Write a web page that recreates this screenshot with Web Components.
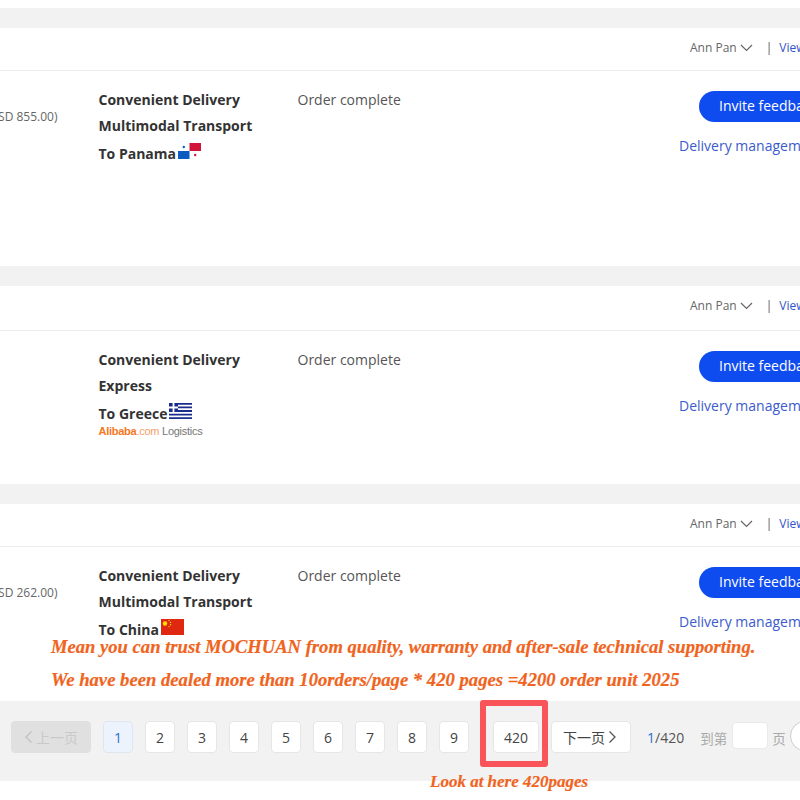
<!DOCTYPE html>
<html>
<head>
<meta charset="utf-8">
<title>Orders</title>
<style>
  html, body { margin: 0; background: #fff; }
  body { width: 800px; height: 800px; overflow: hidden; position: relative; font-family: "Open Sans", sans-serif; padding-top: 8px; box-sizing: border-box; }
</style>
</head>
<body>
<order-list>
  <order-card head="42" height="238" price="(USD 855.00)">
    <span slot="line1">Multimodal Transport</span>
    <span slot="dest">To Panama</span>
    <flag-icon slot="flag" country="pa"></flag-icon>
  </order-card>
  <order-card head="44" height="198">
    <span slot="line1">Express</span>
    <span slot="dest">To Greece</span>
    <flag-icon slot="flag" country="gr"></flag-icon>
    <logistics-logo slot="extra"></logistics-logo>
  </order-card>
  <order-card head="42" height="197" price="(USD 262.00)" last>
    <span slot="line1">Multimodal Transport</span>
    <span slot="dest">To China</span>
    <flag-icon slot="flag" country="cn"></flag-icon>
  </order-card>
</order-list>
<pager-bar></pager-bar>
<note-text x="51" y="635" size="18.6">Mean you can trust MOCHUAN from quality, warranty and after-sale technical supporting.</note-text>
<note-text x="51" y="668" size="18.66">We have been dealed more than 10orders/page * 420 pages =4200 order unit 2025</note-text>
<note-text x="430" y="770" size="17">Look at here 420pages</note-text>
<red-box></red-box>

<script>
class OrderList extends HTMLElement {
  constructor() {
    super();
    this.attachShadow({ mode: 'open' });
    this.shadowRoot.innerHTML = `
      <style>
        :host { display: flex; flex-direction: column; gap: 20px; background: #f2f2f2; padding-top: 20px; }
      </style>
      <slot></slot>`;
  }
}

class OrderCard extends HTMLElement {
  constructor() {
    super();
    this.attachShadow({ mode: 'open' });
  }
  connectedCallback() {
    const head = this.getAttribute('head');
    const height = this.getAttribute('height');
    const price = this.getAttribute('price') || '';
    this.shadowRoot.innerHTML = `
      <style>
        :host { display: block; background: #fff; height: ${height}px; overflow: hidden; color: #333; font-size: 14px; }
        .head { height: ${head}px; border-bottom: 1px solid #ececec; box-sizing: content-box; display: flex; align-items: flex-start; padding-left: 690px; font-size: 12px; line-height: 16px; color: #666; white-space: nowrap; }
        .head span { margin-top: 12px; flex: none; }
        .head svg { margin: 16px 0 0 3px; flex: none; }
        .head .sep { margin-left: 13px; color: #555; }
        .head .view { margin-left: 7px; color: #2f55c8; }
        .row { display: grid; grid-template-columns: 98.5px 199px 381.5px 200px; padding-top: 16px; line-height: 26px; }
        .price { font-size: 12px; color: #666; text-align: right; padding-top: 17px; padding-right: 41px; white-space: nowrap; direction: rtl; }
        .price span { unicode-bidi: plaintext; }
        .ship { font-weight: 700; white-space: nowrap; }
        .dest { display: flex; align-items: flex-end; height: 30px; gap: 2px; line-height: 30px; }
        .dest span { display: block; }
        .status { color: #555; }
        .actions { white-space: nowrap; }
        .btn { display: block; width: 140px; height: 31px; line-height: 30px; margin: 4px 0 0 20px; background: #0f4cf0; color: #fff; border-radius: 16px 0 0 16px; padding-left: 20px; }
        .link { display: block; color: #3b5bcc; margin-top: 11px; }
      </style>
      <div class="head">
        <span>Ann Pan</span>
        <svg width="13" height="8" viewBox="0 0 13 8"><path d="M1 1l5.5 5.5L12 1" fill="none" stroke="#666" stroke-width="1.2"/></svg>
        <span class="sep">|</span>
        <span class="view">View details</span>
      </div>
      <div class="row">
        <div class="price"><span>${price}</span></div>
        <div class="ship">
          <div>Convenient Delivery</div>
          <div><slot name="line1"></slot></div>
          <div class="dest"><slot name="dest"></slot><slot name="flag"></slot></div>
          <slot name="extra"></slot>
        </div>
        <div class="status">Order complete</div>
        <div class="actions">
          <span class="btn">Invite feedback</span>
          <span class="link">Delivery management</span>
        </div>
      </div>`;
  }
}

class FlagIcon extends HTMLElement {
  constructor() {
    super();
    this.attachShadow({ mode: 'open' });
  }
  connectedCallback() {
    const flags = {
      pa: `<rect width="23" height="16" fill="#fff"/>
           <rect x="11.5" width="11.5" height="8" fill="#d2143a"/>
           <rect y="8" width="11.5" height="8" fill="#0a5cc0"/>
           <circle cx="5.8" cy="4" r="1.2" fill="#0a5cc0"/>
           <circle cx="17.2" cy="12" r="1.2" fill="#d2143a"/>`,
      gr: `<rect width="23" height="16" fill="#fff"/>
           <path d="M0 .9h23M0 4.4h23M0 8h23M0 11.6h23M0 15.1h23" stroke="#1a2d8c" stroke-width="1.8"/>
           <rect width="9" height="9" fill="#1a2d8c"/>
           <path d="M4.5 0v9M0 4.5h9" stroke="#fff" stroke-width="1.8"/>`,
      cn: `<rect width="23" height="16" fill="#de2910"/>
           <circle cx="4" cy="4.5" r="2.2" fill="#ffde00"/>
           <circle cx="8" cy="1.6" r=".7" fill="#ffde00"/>
           <circle cx="9.6" cy="3.4" r=".7" fill="#ffde00"/>
           <circle cx="9.6" cy="5.8" r=".7" fill="#ffde00"/>
           <circle cx="8" cy="7.6" r=".7" fill="#ffde00"/>`
    };
    this.shadowRoot.innerHTML = `
      <style>
        :host { display: block; width: 23px; height: 16px; margin-bottom: 10px; }
        svg { display: block; }
      </style>
      <svg width="23" height="16" viewBox="0 0 23 16">${flags[this.getAttribute('country')]}</svg>`;
  }
}

class LogisticsLogo extends HTMLElement {
  constructor() {
    super();
    this.attachShadow({ mode: 'open' });
    this.shadowRoot.innerHTML = `
      <style>
        :host { display: block; font: 400 11px/14px "Liberation Sans", sans-serif; color: #777; margin-top: -5px; letter-spacing: -0.26px; }
        b { color: #f5761e; }
        i { font-style: normal; color: #f5a06a; }
      </style>
      <b>Alibaba</b><i>.com</i> Logistics`;
  }
}

class PageBtn extends HTMLElement {
  constructor() {
    super();
    this.attachShadow({ mode: 'open' });
    this.shadowRoot.innerHTML = `
      <style>
        :host { display: flex; flex: none; align-items: center; justify-content: center; box-sizing: border-box; width: 30px; height: 32px; background: #fff; border: 1px solid #e6e6e6; border-radius: 4px; font-size: 14px; color: #444; white-space: nowrap; }
        :host([current]) { background: #edf3fd; color: #2f6fd0; border-color: #e0e6f0; }
        :host([wide]) { width: 46px; }
        :host([nav]) { width: 80px; font-family: "Noto Sans CJK SC", sans-serif; gap: 3px; }
        :host([disabled]) { background: #e0e0e0; border-color: #e0e0e0; color: #c9c9c9; }
      </style>
      <slot></slot>`;
  }
}

class PagerBar extends HTMLElement {
  constructor() {
    super();
    this.attachShadow({ mode: 'open' });
    const nums = [2, 3, 4, 5, 6, 7, 8, 9].map(n => `<page-btn>${n}</page-btn>`).join('');
    this.shadowRoot.innerHTML = `
      <style>
        :host { display: flex; align-items: flex-start; box-sizing: border-box; height: 80px; padding: 20px 0 0 11px; background: #f2f2f2; overflow: hidden; white-space: nowrap; font-size: 14px; color: #444; }
        .prev { margin-right: 12px; }
        .nums { display: flex; flex: none; gap: 12px; }
        .dots { flex: none; width: 24px; text-align: center; line-height: 30px; color: #ccc; font-size: 12px; }
        .next { margin-left: 12px; padding-right: 2px; }
        .total { flex: none; margin-left: 16px; line-height: 34px; color: #555; }
        .total b { font-weight: 400; color: #2f6fd0; }
        .cjk { flex: none; font-family: "Noto Sans CJK SC", sans-serif; color: #aaa; font-size: 13.5px; line-height: 34px; }
        .goto { margin-left: 16px; }
        .input { flex: none; width: 36px; height: 27px; background: #fff; border: 1px solid #e9e9e9; border-radius: 4px; box-sizing: border-box; margin: 1px 4px 0 5px; }
        .go { flex: none; width: 40px; height: 30px; margin-left: 4px; background: #fff; border: 1px solid #ccc; border-radius: 15px; box-sizing: border-box; }
      </style>
      <page-btn nav disabled class="prev">
        <svg width="9" height="14" viewBox="0 0 9 14"><path d="M7.5 1.5L2 7l5.5 5.5" fill="none" stroke="#c4c4c4" stroke-width="1.5"/></svg>上一页
      </page-btn>
      <div class="nums">
        <page-btn current>1</page-btn>${nums}
      </div>
      <span class="dots">·</span>
      <page-btn wide>420</page-btn>
      <page-btn nav class="next">下一页
        <svg width="9" height="14" viewBox="0 0 9 14"><path d="M1.5 1.5L7 7l-5.5 5.5" fill="none" stroke="#555" stroke-width="1.3"/></svg>
      </page-btn>
      <span class="total"><b>1</b>/420</span>
      <span class="cjk goto">到第</span>
      <span class="input"></span>
      <span class="cjk">页</span>
      <span class="go"></span>`;
  }
}

class NoteText extends HTMLElement {
  constructor() {
    super();
    this.attachShadow({ mode: 'open' });
  }
  connectedCallback() {
    this.shadowRoot.innerHTML = `
      <style>
        :host { position: absolute; left: ${this.getAttribute('x')}px; top: ${this.getAttribute('y')}px; font: italic 700 ${this.getAttribute('size')}px/24px "Liberation Serif", serif; color: #f0641e; white-space: nowrap; -webkit-text-stroke: 0.2px #f0641e; }
      </style>
      <slot></slot>`;
  }
}

class RedBox extends HTMLElement {
  constructor() {
    super();
    this.attachShadow({ mode: 'open' });
    this.shadowRoot.innerHTML = `
      <style>
        :host { position: absolute; left: 480px; top: 700px; width: 68px; height: 67px; box-sizing: border-box; border: 6px solid #f9545a; border-radius: 3px; }
      </style>`;
  }
}

customElements.define('order-list', OrderList);
customElements.define('order-card', OrderCard);
customElements.define('flag-icon', FlagIcon);
customElements.define('logistics-logo', LogisticsLogo);
customElements.define('page-btn', PageBtn);
customElements.define('pager-bar', PagerBar);
customElements.define('note-text', NoteText);
customElements.define('red-box', RedBox);
</script>
</body>
</html>
